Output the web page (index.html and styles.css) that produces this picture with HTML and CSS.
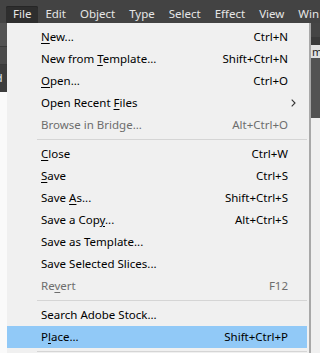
FILE: index.html
```html
<!DOCTYPE html>
<html>
<head>
<meta charset="utf-8">
<link rel="stylesheet" href="styles.css">
</head>
<body>
<div class="app">
  <div class="menubar">
    <span class="mb-item active">File</span>
    <span class="mb-item">Edit</span>
    <span class="mb-item">Object</span>
    <span class="mb-item">Type</span>
    <span class="mb-item">Select</span>
    <span class="mb-item">Effect</span>
    <span class="mb-item">View</span>
    <span class="mb-item">Win</span>
  </div>
  <div class="workspace">
    <div class="left-col">
      <div class="l1"></div>
      <div class="l2"></div>
      <div class="l3"><span>ld</span></div>
      <div class="l4"></div>
    </div>
    <div class="mid-col"></div>
    <div class="right-col">
      <div class="r1"></div>
      <div class="r2"></div>
      <div class="r3"><span>m</span></div>
      <div class="r4"></div>
      <div class="r5"></div>
    </div>
  </div>

  <div class="menu">
    <div class="row"><span><u>N</u>ew...</span><span>Ctrl+N</span></div>
    <div class="row"><span>New from <u>T</u>emplate...</span><span>Shift+Ctrl+N</span></div>
    <div class="row"><span><u>O</u>pen...</span><span>Ctrl+O</span></div>
    <div class="row"><span>Open Recent <u>F</u>iles</span><span class="arrow"><svg width="5" height="8" viewBox="0 0 5 8"><path d="M0.7 0.7 L4 4 L0.7 7.3" fill="none" stroke="#333" stroke-width="1.1"/></svg></span></div>
    <div class="row disabled"><span>Browse in Bridge...</span><span>Alt+Ctrl+O</span></div>
    <div class="sep"></div>
    <div class="row"><span><u>C</u>lose</span><span>Ctrl+W</span></div>
    <div class="row"><span><u>S</u>ave</span><span>Ctrl+S</span></div>
    <div class="row"><span>Save <u>A</u>s...</span><span>Shift+Ctrl+S</span></div>
    <div class="row"><span>Save a Cop<u>y</u>...</span><span>Alt+Ctrl+S</span></div>
    <div class="row"><span>Save as Template...</span><span></span></div>
    <div class="row"><span>Save Selected Slices...</span><span></span></div>
    <div class="row disabled"><span>Re<u>v</u>ert</span><span>F12</span></div>
    <div class="sep"></div>
    <div class="row"><span>Search Adobe Stock...</span><span></span></div>
    <div class="row hl"><span>P<u>l</u>ace...</span><span>Shift+Ctrl+P</span></div>
    <div class="sep"></div>
  </div>
</div>
</body>
</html>
```

FILE: styles.css
```css
* { box-sizing: border-box; }
html, body { margin: 0; padding: 0; }
body {
  width: 320px;
  height: 353px;
  overflow: hidden;
  font-family: "Noto Sans", "Open Sans", sans-serif;
  font-size: 11.5px;
  background: #f0f0f0;
}
.app { position: relative; width: 320px; height: 353px; overflow: hidden; }

.menubar {
  height: 23px;
  background: #434343;
  display: flex;
  align-items: flex-end;
  padding-left: 6px;
  color: #e6e6e6;
  font-size: 11.5px;
}
.mb-item {
  height: 17px;
  line-height: 15px;
  padding: 0 7px;
  margin-right: 0;
  white-space: nowrap;
}
.mb-item.active {
  background: #2e2e2e;
  border-radius: 2px 2px 0 0;
  box-shadow: inset 0 1px 0 #262626;
}

.workspace {
  display: grid;
  grid-template-columns: 7px 1fr 9px;
  height: 330px;
}
.left-col, .right-col { display: flex; flex-direction: column; overflow: hidden; }
.l1 { height: 24px; background: #535353; border-bottom: 1px solid #3a3a3a; }
.l2 { height: 18px; background: #4b4b4b; border-bottom: 1px solid #3a3a3a; }
.l3 { height: 27px; background: #3d3d3d; color: #dfe7f0; font-size: 11px; line-height: 18px; padding-top: 4px; }
.l3 span { margin-left: -7px; }
.l4 { flex: 1; background: #fafafa; }

.mid-col { background: #f0f0f0; }
.r1 { height: 14px; background: #454545; }
.r2 { height: 8px; background: #3a3a3a; }
.r3 { height: 13px; background: #e1e1e1; color: #222; font-size: 11px; line-height: 13px; padding-left: 1px; }
.r4 { height: 60px; background: #535353; }
.r5 { flex: 1; background: #f0f0f0; }

.menu {
  position: absolute;
  left: 7px;
  top: 23px;
  width: 304px;
  padding-top: 3px;
  background: #f0f0f0;
  border-right: 2px solid #a8a8a8;
  color: #000;
}
.row {
  height: 22px;
  line-height: 22px;
  display: flex;
  justify-content: space-between;
  padding: 0 19px 0 34px;
  margin-right: 2px;
  white-space: nowrap;
}
.row u { text-decoration-thickness: 1px; text-underline-offset: 2px; }
.row.disabled { color: #6d6d6d; }
.row.hl { background: #91c9f7; }
.arrow { display: flex; align-items: center; margin-right: -8px; }
.sep {
  height: 7px;
  padding-top: 3px;
  margin-left: 30px;
  margin-right: 2px;
}
.sep::before {
  content: "";
  display: block;
  height: 1px;
  background: #d5d5d5;
}
```
